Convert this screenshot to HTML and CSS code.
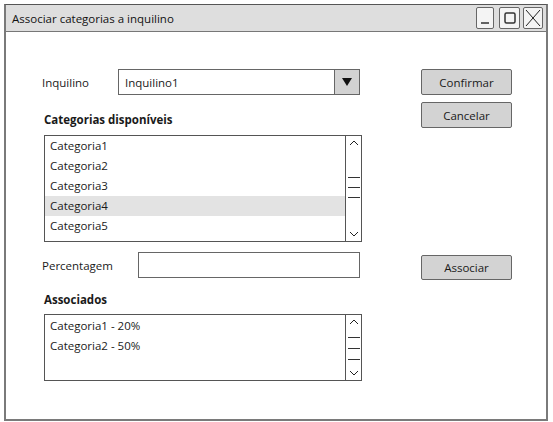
FILE: index.html
```html
<!DOCTYPE html>
<html>
<head>
<meta charset="utf-8">
<link rel="stylesheet" href="styles.css">
</head>
<body>
<div class="window">
  <div class="titlebar">
    <span class="title">Associar categorias a inquilino</span>
    <div class="wbtns">
      <span class="wbtn wb-min"><svg width="16" height="20" viewBox="0 0 16 20"><line x1="4" y1="15" x2="12" y2="15" stroke="#333" stroke-width="1.5"/></svg></span>
      <span class="wbtn wb-max"><svg width="18" height="20" viewBox="0 0 18 20"><rect x="4" y="5" width="10" height="10" rx="1.5" fill="none" stroke="#333" stroke-width="1.5"/></svg></span>
      <span class="wbtn"><svg width="18" height="20" viewBox="0 0 18 20"><path d="M2 2 L16 18 M16 2 L2 18" stroke="#222" stroke-width="1"/></svg></span>
    </div>
  </div>
  <div class="content">
    <div class="left">
      <div class="row row-inq">
        <span class="label lbl-inq">Inquilino</span>
        <div class="select">
          <span class="select-text">Inquilino1</span>
          <span class="select-btn"><svg width="10" height="8" viewBox="0 0 10 8"><path d="M0 0 L10 0 L5 8 Z" fill="#111"/></svg></span>
        </div>
      </div>
      <div class="heading h1">Categorias disponíveis</div>
      <div class="list list1">
        <div class="items">
          <div class="item">Categoria1</div>
          <div class="item">Categoria2</div>
          <div class="item">Categoria3</div>
          <div class="item sel">Categoria4</div>
          <div class="item">Categoria5</div>
        </div>
        <div class="scroll">
          <svg class="arrow" width="10" height="6" viewBox="0 0 10 6"><path d="M1 5 L5 1 L9 5" fill="none" stroke="#222"/></svg>
          <div class="thumb thumb1"><i></i><i></i><i></i></div>
          <svg class="arrow down" width="10" height="6" viewBox="0 0 10 6"><path d="M1 1 L5 5 L9 1" fill="none" stroke="#222"/></svg>
        </div>
      </div>
      <div class="row row-pct">
        <span class="label lbl-pct">Percentagem</span>
        <div class="input"></div>
      </div>
      <div class="heading h2">Associados</div>
      <div class="list list2">
        <div class="items">
          <div class="item">Categoria1 - 20%</div>
          <div class="item">Categoria2 - 50%</div>
        </div>
        <div class="scroll">
          <svg class="arrow" width="10" height="6" viewBox="0 0 10 6"><path d="M1 5 L5 1 L9 5" fill="none" stroke="#222"/></svg>
          <div class="thumb thumb2"><i></i><i></i><i></i></div>
          <svg class="arrow down" width="10" height="6" viewBox="0 0 10 6"><path d="M1 1 L5 5 L9 1" fill="none" stroke="#222"/></svg>
        </div>
      </div>
    </div>
    <div class="right">
      <div class="btn">Confirmar</div>
      <div class="btn btn-cancel">Cancelar</div>
      <div class="btn btn-assoc">Associar</div>
    </div>
  </div>
</div>
</body>
</html>
```

FILE: styles.css
```css
* { box-sizing: border-box; }
html, body { margin: 0; padding: 0; background: #fff; }
body {
  font-family: "Comic Sans MS", "Open Sans", sans-serif;
  font-size: 11.5px;
  color: #1a1a1a;
}
.window {
  margin: 4px 0 0 4px;
  width: 544px;
  height: 417px;
  border: 2px solid #7a7a7a;
  border-top: 1.5px solid #555;
  display: flex;
  flex-direction: column;
}
.titlebar {
  height: 27px;
  background: #dedede;
  border-bottom: 1.5px solid #777;
  display: flex;
  align-items: center;
  justify-content: space-between;
  padding: 0 0 0 6px;
}
.title { font-size: 11.5px; color: #111; }
.wbtns { display: flex; gap: 3px; padding-right: 3px; }
.wbtn {
  width: 20px;
  height: 22px;
  border: 1.5px solid #666;
  border-radius: 2px;
  background: #f4f4f4;
  display: flex;
  align-items: center;
  justify-content: center;
}
.wbtn.wb-min { width: 18px; margin-right: 2px; }
.wbtn.wb-max { width: 21px; }
.content {
  display: flex;
  padding: 37px 0 0 36px;
}
.left { width: 322px; }
.row { display: flex; align-items: center; }
.label { font-size: 11.5px; }
.lbl-inq { width: 76px; }
.select {
  width: 242px;
  height: 26px;
  border: 1.5px solid #666;
  display: flex;
  align-items: center;
}
.select-text { flex: 1; padding-left: 6px; }
.select-btn {
  width: 25px;
  height: 100%;
  background: #d2d2d2;
  border-left: 1.5px solid #666;
  display: flex;
  align-items: center;
  justify-content: center;
}
.heading { font-weight: bold; font-size: 11.5px; padding-left: 2px; }
.h1 { margin-top: 17px; height: 16px; }
.list {
  margin-left: 2px;
  width: 318px;
  border: 1.5px solid #555;
  display: flex;
}
.list1 { margin-top: 7px; height: 107px; }
.list2 { margin-top: 6px; height: 67px; }
.items { flex: 1; padding-top: 0; }
.list2 .items { padding-top: 1px; }
.item { height: 20px; line-height: 20px; padding-left: 5px; }
.item.sel { background: #e3e3e3; }
.scroll {
  width: 16px;
  border-left: 1.5px solid #555;
  display: flex;
  flex-direction: column;
  align-items: center;
  padding: 4px 0 4px;
}
.arrow.down { margin-top: auto; }
.thumb { display: flex; flex-direction: column; width: 12px; }
.thumb i { display: block; height: 1px; background: #333; }
.thumb1 { gap: 9px; margin-top: 31px; }
.thumb2 { gap: 10px; margin-top: 12px; }
.row-pct { margin-top: 10px; }
.lbl-pct { width: 96px; }
.input {
  width: 222px;
  height: 26px;
  border: 1.5px solid #666;
}
.h2 { margin-top: 14px; height: 16px; }
.right {
  margin-left: 57px;
  display: flex;
  flex-direction: column;
}
.btn {
  width: 91px;
  height: 26px;
  background: #d3d3d3;
  border: 1.5px solid #666;
  border-radius: 2px;
  display: flex;
  align-items: center;
  justify-content: center;
  font-size: 11.5px;
}
.btn-cancel { margin-top: 7px; }
.btn-assoc { margin-top: 127px; height: 25px; }
```
